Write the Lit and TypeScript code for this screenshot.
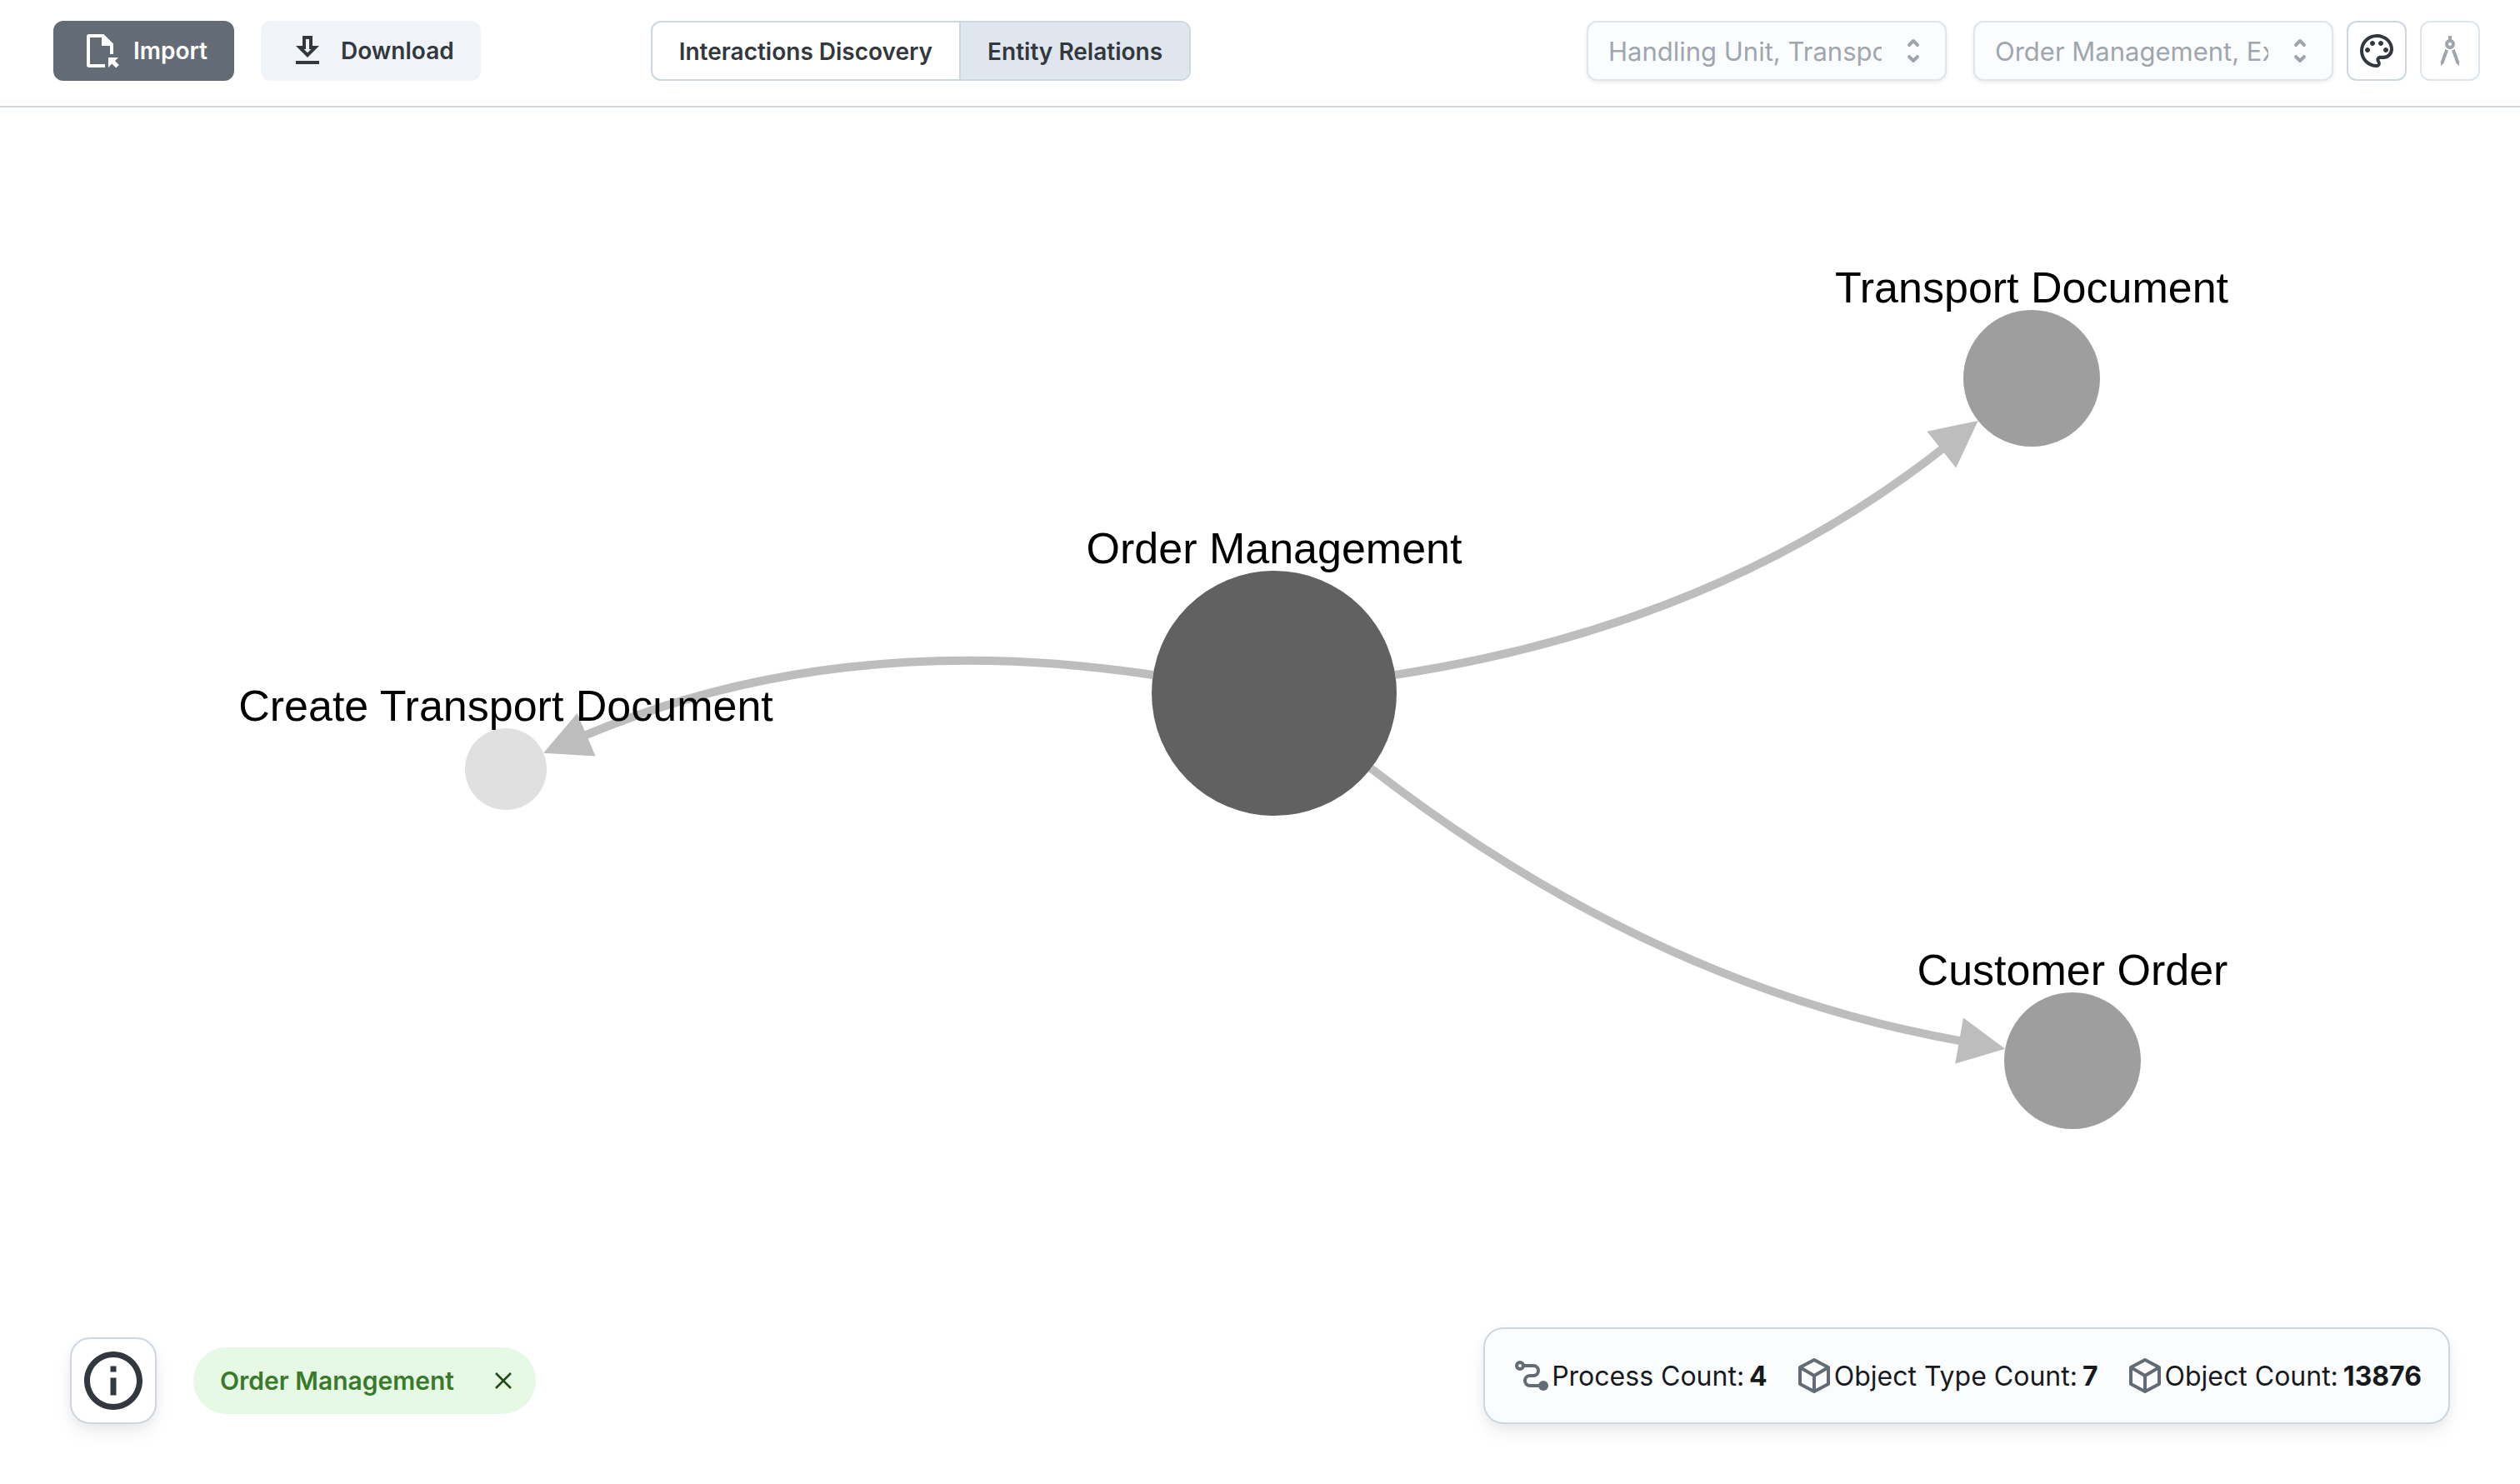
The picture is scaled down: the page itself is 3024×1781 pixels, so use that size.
import { LitElement, html, svg, css } from "lit";
import { customElement, property, state } from "lit/decorators.js";
import { classMap } from "lit/directives/class-map.js";

interface GraphNode {
  id: string;
  x: number;
  y: number;
  r: number;
  fill: string;
}

interface GraphEdge {
  from: string;
  to: string;
}

const NODES: GraphNode[] = [
  { id: "Create Transport Document", x: 607, y: 923, r: 49, fill: "#e0e0e0" },
  { id: "Order Management", x: 1529, y: 832, r: 147, fill: "#616161" },
  { id: "Transport Document", x: 2438, y: 454, r: 82, fill: "#9e9e9e" },
  { id: "Customer Order", x: 2487, y: 1273, r: 82, fill: "#9e9e9e" },
];

const EDGES: GraphEdge[] = [
  { from: "Order Management", to: "Create Transport Document" },
  { from: "Order Management", to: "Transport Document" },
  { from: "Order Management", to: "Customer Order" },
];

const BEND = 130;
const ARROW_LENGTH = 56;
const ARROW_HALF = 28;

/** Curve and arrow head of an edge bent away from the straight line between two nodes. */
function edgeShape(edge: GraphEdge) {
  const a = NODES.find((n) => n.id === edge.from)!;
  const b = NODES.find((n) => n.id === edge.to)!;
  const dx = b.x - a.x;
  const dy = b.y - a.y;
  const len = Math.hypot(dx, dy);
  // The bend starts halfway along the part of the line outside both circles.
  const half = (len + a.r - b.r) / 2;
  const cx = a.x + (dx / len) * half - (dy / len) * BEND;
  const cy = a.y + (dy / len) * half + (dx / len) * BEND;

  const sl = Math.hypot(cx - a.x, cy - a.y);
  const sx = a.x + ((cx - a.x) / sl) * a.r;
  const sy = a.y + ((cy - a.y) / sl) * a.r;

  const el = Math.hypot(cx - b.x, cy - b.y);
  const ux = (cx - b.x) / el;
  const uy = (cy - b.y) / el;
  const tx = b.x + ux * b.r;
  const ty = b.y + uy * b.r;
  const bx = tx + ux * ARROW_LENGTH;
  const by = ty + uy * ARROW_LENGTH;

  const f = (n: number) => n.toFixed(1);
  return {
    curve: `M${f(sx)} ${f(sy)}Q${f(cx)} ${f(cy)} ${f(bx - ux * 6)} ${f(by - uy * 6)}`,
    head: `${f(tx)},${f(ty)} ${f(bx - uy * ARROW_HALF)},${f(by + ux * ARROW_HALF)} ${f(
      bx + uy * ARROW_HALF
    )},${f(by - ux * ARROW_HALF)}`,
  };
}

const importIcon = html`<svg class="icon" viewBox="0 0 48 48" aria-hidden="true">
  <path d="M11 4H28.500L40 15.500V28H36V18H26V8H12V40H30V44H11A3 3 0 0 1 8 41V7A3 3 0 0 1 11 4Z" />
  <path d="M34 32H46L42 36L46.800 41L43.300 44.500L38.300 39.500L34 44Z" />
</svg>`;

const downloadIcon = html`<svg class="icon" viewBox="0 0 24 24" aria-hidden="true">
  <path d="M13,5V11H14.17L12,13.17L9.83,11H11V5H13M15,3H9V9H5L12,16L19,9H15V3M19,18H5V20H19V18Z" />
</svg>`;

const paletteIcon = html`<svg class="icon" viewBox="0 0 24 24" aria-hidden="true">
  <path
    d="M12,22A10,10 0 0,1 2,12A10,10 0 0,1 12,2C17.5,2 22,6 22,11A6,6 0 0,1 16,17H14.2C13.9,17 13.7,17.2 13.7,17.5C13.7,17.6 13.8,17.7 13.8,17.8C14.2,18.3 14.4,18.9 14.4,19.5C14.5,20.9 13.4,22 12,22M12,4A8,8 0 0,0 4,12A8,8 0 0,0 12,20C12.3,20 12.5,19.8 12.5,19.5C12.5,19.3 12.4,19.2 12.4,19.1C11.9,18.6 11.7,18 11.7,17.4C11.7,16 12.8,14.9 14.2,14.9H16A4,4 0 0,0 20,10.9C20,7.1 16.4,4 12,4M6.5,10C7.3,10 8,10.7 8,11.5C8,12.3 7.3,13 6.5,13C5.7,13 5,12.3 5,11.5C5,10.7 5.7,10 6.5,10M9.5,6C10.3,6 11,6.7 11,7.5C11,8.3 10.3,9 9.5,9C8.7,9 8,8.3 8,7.5C8,6.7 8.7,6 9.5,6M14.5,6C15.3,6 16,6.7 16,7.5C16,8.3 15.3,9 14.5,9C13.7,9 13,8.3 13,7.5C13,6.7 13.7,6 14.5,6M17.5,10C18.3,10 19,10.7 19,11.5C19,12.3 18.3,13 17.5,13C16.7,13 16,12.3 16,11.5C16,10.7 16.7,10 17.5,10Z"
  />
</svg>`;

const compassIcon = html`<svg class="icon" viewBox="0 0 24 24" aria-hidden="true">
  <path
    fill-rule="evenodd"
    d="M6.36 18.78L6.61 21l1.62-1.54 2.77-7.6c-.68-.17-1.28-.51-1.77-.98zM14.77 10.88c-.49.47-1.1.81-1.77.98l2.77 7.6L17.39 21l.25-2.22zM15 8c0-1.300-.84-2.400-2-2.820V3h-2v2.180C9.840 5.600 9 6.700 9 8c0 1.660 1.340 3 3 3s3-1.340 3-3zM12 9c-.55 0-1-.45-1-1s.45-1 1-1 1 .45 1 1-.45 1-1 1z"
  />
</svg>`;

const infoIcon = html`<svg class="info-icon" viewBox="0 0 24 24" aria-hidden="true">
  <path
    d="M11 7h2v2h-2zM11 11h2v6h-2zM12 2C6.48 2 2 6.48 2 12s4.480 10 10 10 10-4.480 10-10S17.520 2 12 2zM12 20c-4.410 0-8-3.590-8-8s3.590-8 8-8 8 3.590 8 8-3.590 8-8 8z"
  />
</svg>`;

const routeIcon = html`<svg class="icon line" viewBox="0 0 48 48" aria-hidden="true">
  <circle cx="10" cy="12" r="4" />
  <path d="M14 12H26A6 6 0 0 1 26 24H22A6 6 0 0 0 22 36H36" />
  <circle class="solid" cx="38" cy="36" r="6" />
</svg>`;

const boxIcon = html`<svg class="icon line" viewBox="0 0 48 48" aria-hidden="true">
  <path d="M24 5L41 14V34L24 43L7 34V14ZM7 14L24 24L41 14M24 24V43" />
</svg>`;

/** Drop-down with a double chevron. */
@customElement("filter-select")
export class FilterSelect extends LitElement {
  @property() label = "";
  @property() value = "";

  static styles = css`
    :host {
      display: block;
    }
    .wrap {
      display: grid;
      align-items: center;
    }
    .field,
    .chevrons {
      grid-area: 1 / 1;
    }
    .field {
      appearance: none;
      box-sizing: border-box;
      width: 432px;
      height: 72px;
      margin: 0;
      padding: 0 76px 0 24px;
      border: 2px solid #dde5ed;
      border-radius: 12px;
      background: #fbfcfe;
      box-shadow: 0 2px 4px rgba(21, 21, 21, 0.08);
      color: #9fa6ad;
      opacity: 1;
      font: 400 31px Inter, "Liberation Sans", sans-serif;
      text-overflow: clip;
    }
    .chevrons {
      justify-self: end;
      width: 20px;
      height: 32px;
      margin-right: 30px;
      fill: none;
      stroke: #9fa6ad;
      stroke-width: 4;
      stroke-linecap: round;
      stroke-linejoin: round;
      pointer-events: none;
    }
  `;

  render() {
    return html`<div class="wrap">
      <select class="field" aria-label=${this.label} disabled>
        <option selected>${this.value}</option>
      </select>
      <svg class="chevrons" viewBox="0 0 20 32" aria-hidden="true">
        <path d="M5 9L10 4L15 9M5 23L10 28L15 23" />
      </svg>
    </div>`;
  }
}

/** Node-link drawing of the related entities. */
@customElement("relation-graph")
export class RelationGraph extends LitElement {
  static styles = css`
    :host {
      display: block;
    }
    .graph {
      display: block;
      width: 100%;
      height: 100%;
    }
    .curve {
      fill: none;
      stroke: #bdbdbd;
      stroke-width: 10;
    }
    .head {
      fill: #bdbdbd;
    }
    .label {
      fill: #000;
      font: 400 52px "Liberation Sans", Arial, sans-serif;
      text-anchor: middle;
    }
  `;

  render() {
    return html`<svg class="graph" viewBox="0 129 3024 1652" role="img" aria-label="Entity relations">
      ${EDGES.map((edge) => {
        const shape = edgeShape(edge);
        return svg`<path class="curve" d=${shape.curve}></path><polygon class="head" points=${shape.head}></polygon>`;
      })}
      ${NODES.map(
        (n) => svg`<circle cx=${n.x} cy=${n.y} r=${n.r} fill=${n.fill}></circle>
        <text class="label" x=${n.x} y=${n.y - n.r - 9}>${n.id}</text>`
      )}
    </svg>`;
  }
}

@customElement("app-root")
export class AppRoot extends LitElement {
  @state() private tab = "Entity Relations";

  private stats = [
    { icon: routeIcon, label: "Process Count:", value: "4" },
    { icon: boxIcon, label: "Object Type Count:", value: "7" },
    { icon: boxIcon, label: "Object Count:", value: "13876" },
  ];

  static styles = css`
    :host {
      display: flex;
      flex-direction: column;
      min-height: 100vh;
      background: #fff;
      color: #32383e;
      font-family: Inter, "Liberation Sans", sans-serif;
    }
    button {
      margin: 0;
      padding: 0;
      border: 0;
      background: none;
      color: inherit;
      font: inherit;
    }
    .icon {
      flex: none;
      width: 48px;
      height: 48px;
      fill: currentColor;
    }
    .line {
      fill: none;
      stroke: #636b74;
      stroke-width: 4;
      stroke-linecap: round;
      stroke-linejoin: round;
    }
    .solid {
      fill: #636b74;
      stroke: none;
    }
    .bar {
      display: flex;
      align-items: center;
      gap: 204px;
      padding: 25px 48px 30px 64px;
      border-bottom: 2px solid #cdd7e1;
    }
    .actions {
      display: flex;
      gap: 32px;
    }
    .action {
      display: flex;
      align-items: center;
      gap: 16px;
      height: 72px;
      padding: 0 32px;
      border-radius: 12px;
      background: #f0f4f8;
      font-size: 28px;
      font-weight: 600;
    }
    .primary {
      background: #636b74;
      color: #fff;
    }
    .tabs {
      display: flex;
      box-sizing: border-box;
      height: 72px;
      overflow: hidden;
      border: 2px solid #cdd7e1;
      border-radius: 12px;
    }
    .tab {
      padding: 2px 32px 0;
      font-size: 28px;
      font-weight: 600;
    }
    .tab + .tab {
      border-left: 2px solid #cdd7e1;
    }
    .current {
      background: #dfe6ed;
    }
    .filters {
      display: flex;
      gap: 32px;
      margin-left: auto;
    }
    .tools {
      display: flex;
      gap: 16px;
      margin-left: -16px;
    }
    .tool {
      display: grid;
      place-items: center;
      box-sizing: border-box;
      width: 72px;
      height: 72px;
      border: 2px solid #cdd7e1;
      border-radius: 12px;
    }
    .tool:disabled {
      border-color: #dde5ed;
      color: #9fa6ad;
    }
    .stage {
      display: grid;
      flex: 1;
      min-height: 0;
    }
    .canvas,
    .overlay {
      grid-area: 1 / 1;
      min-height: 0;
    }
    .overlay {
      z-index: 1;
      align-self: end;
      display: flex;
      align-items: flex-end;
      justify-content: space-between;
      padding: 0 84px 72px;
    }
    .selection {
      display: flex;
      align-items: center;
      gap: 44px;
    }
    .info,
    .stats {
      box-sizing: border-box;
      border: 2px solid #cdd7e1;
      border-radius: 24px;
      box-shadow: 0 4px 16px -4px rgba(21, 21, 21, 0.08), 0 12px 24px -4px rgba(21, 21, 21, 0.08);
    }
    .info {
      display: grid;
      place-items: center;
      width: 104px;
      height: 104px;
      background: #fff;
    }
    .info-icon {
      width: 84px;
      height: 84px;
      fill: currentColor;
    }
    .chip {
      display: flex;
      align-items: center;
      gap: 48px;
      height: 80px;
      padding: 0 28px 0 32px;
      border-radius: 40px;
      background: #e5f9e5;
      color: #3b7a2b;
      font-size: 30px;
      font-weight: 600;
    }
    .close {
      display: grid;
    }
    .close-icon {
      width: 22px;
      height: 22px;
      fill: none;
      stroke: #1f4a14;
      stroke-width: 2.5;
    }
    .stats {
      display: flex;
      align-items: center;
      gap: 32px;
      height: 116px;
      margin: 0;
      padding: 0 32px;
      background: #fbfcfe;
      color: #171a1c;
      font-size: 32px;
    }
    .stat {
      display: flex;
      align-items: center;
    }
    .value {
      margin: 0 0 0 6px;
      font-weight: 700;
    }
  `;

  render() {
    return html`
      <header class="bar">
        <div class="actions">
          <button class="action primary" type="button">${importIcon}Import</button>
          <button class="action" type="button">${downloadIcon}Download</button>
        </div>
        <nav class="tabs" aria-label="View">
          ${["Interactions Discovery", "Entity Relations"].map(
            (name) => html`<button
              type="button"
              class=${classMap({ tab: true, current: name === this.tab })}
              aria-pressed=${name === this.tab}
              @click=${() => (this.tab = name)}
            >
              ${name}
            </button>`
          )}
        </nav>
        <div class="filters">
          <filter-select label="Object types" value="Handling Unit, Transport Document"></filter-select>
          <filter-select label="Processes" value="Order Management, External"></filter-select>
          <div class="tools">
            <button class="tool" type="button" aria-label="Colors">${paletteIcon}</button>
            <button class="tool" type="button" aria-label="Layout" disabled>${compassIcon}</button>
          </div>
        </div>
      </header>
      <main class="stage">
        <relation-graph class="canvas"></relation-graph>
        <div class="overlay">
          <div class="selection">
            <button class="info" type="button" aria-label="Info">${infoIcon}</button>
            <div class="chip">
              <span>Order Management</span>
              <button class="close" type="button" aria-label="Remove">
                <svg class="close-icon" viewBox="0 0 22 22" aria-hidden="true">
                  <path d="M2 2L20 20M20 2L2 20" />
                </svg>
              </button>
            </div>
          </div>
          <dl class="stats">
            ${this.stats.map(
              (s) => html`<div class="stat">
                ${s.icon}
                <dt>${s.label}</dt>
                <dd class="value">${s.value}</dd>
              </div>`
            )}
          </dl>
        </div>
      </main>
    `;
  }
}
